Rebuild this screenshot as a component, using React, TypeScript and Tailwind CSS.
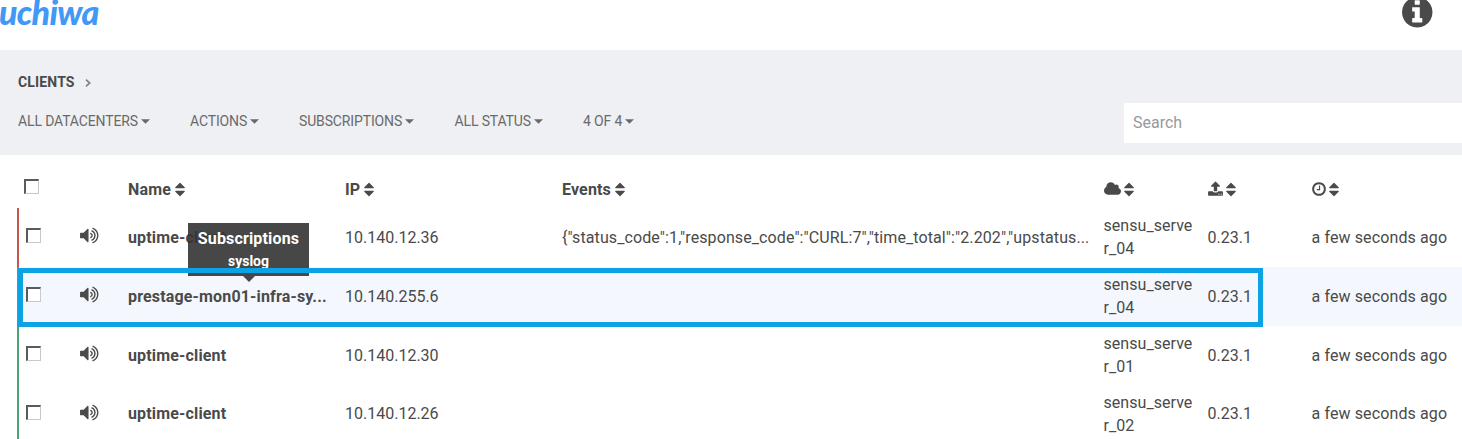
import type { ReactNode } from "react";

const ICONS = {
  volume:
    "M832 352v1088q0 26-19 45t-45 19-45-19l-333-333h-262q-26 0-45-19t-19-45v-384q0-26 19-45t45-19h262l333-333q19-19 45-19t45 19 19 45zm384 544q0 76-42.5 141.5t-112.5 93.5q-10 5-25 5-26 0-45-18.5t-19-45.5q0-21 12-35.5t29-25 34-23 29-36 12-56.5-12-56.5-29-36-34-23-29-25-12-35.5q0-27 19-45.5t45-18.5q15 0 25 5 70 27 112.5 93t42.5 142zm256 0q0 153-85 282.5t-225 188.5q-13 5-25 5-27 0-46-19t-19-45q0-39 39-59 56-29 76-44 74-54 115.5-135.5t41.5-173.5-41.5-173.5-115.5-135.5q-20-15-76-44-39-20-39-59 0-26 19-45t45-19q13 0 26 5 140 59 225 188.5t85 282.5zm256 0q0 230-127 422.5t-338 283.5q-13 5-26 5-26 0-45-19t-19-45q0-36 39-59 7-4 22.5-10.5t22.5-10.5q46-25 82-51 123-91 192-227t69-289-69-289-192-227q-36-26-82-51-7-4-22.5-10.5t-22.5-10.5q-39-23-39-59 0-26 19-45t45-19q13 0 26 5 211 91 338 283.5t127 422.5z",
  upload:
    "M1344 1472q0-26-19-45t-45-19-45 19-19 45 19 45 45 19 45-19 19-45zm256 0q0-26-19-45t-45-19-45 19-19 45 19 45 45 19 45-19 19-45zm128-224v320q0 40-28 68t-68 28h-1472q-40 0-68-28t-28-68v-320q0-40 28-68t68-28h427q21 56 70.5 92t110.5 36h256q61 0 110.5-36t70.5-92h427q40 0 68 28t28 68zm-325-648q-17 40-59 40h-256v448q0 26-19 45t-45 19h-256q-26 0-45-19t-19-45v-448h-256q-42 0-59-40-17-39 14-69l448-448q18-19 45-19t45 19l448 448q31 30 14 69z",
  clock:
    "M1024 544v448q0 14-9 23t-23 9h-320q-14 0-23-9t-9-23v-64q0-14 9-23t23-9h224v-352q0-14 9-23t23-9h64q14 0 23 9t9 23zm416 352q0-148-73-273t-198-198-273-73-273 73-198 198-73 273 73 273 198 198 273 73 273-73 198-198 73-273zm224 0q0 209-103 385.5t-279.5 279.5-385.5 103-385.5-103-279.5-279.5-103-385.5 103-385.5 279.5-279.5 385.5-103 385.5 103 279.5 279.5 103 385.5z",
  cloud:
    "M1984 1152q0 159-112.5 271.5t-271.5 112.5h-1088q-185 0-316.5-131.5t-131.5-316.5q0-132 71-241.5t187-163.5q-2-28-2-43 0-212 150-362t362-150q158 0 286.5 88t187.5 230q70-62 166-62 106 0 181 75t75 181q0 75-41 138 129 30 213 134.5t84 239.5z",
  info: "M1152 1376v-160q0-14-9-23t-23-9h-96v-512q0-14-9-23t-23-9h-320q-14 0-23 9t-9 23v160q0 14 9 23t23 9h96v320h-96q-14 0-23 9t-9 23v160q0 14 9 23t23 9h448q14 0 23-9t9-23zm-128-896v-160q0-14-9-23t-23-9h-192q-14 0-23 9t-9 23v160q0 14 9 23t23 9h192q14 0 23-9t9-23zm640 416q0 209-103 385.5t-279.5 279.5-385.5 103-385.5-103-279.5-279.5-103-385.5 103-385.5 279.5-279.5 385.5-103 385.5 103 279.5 279.5 103 385.5z",
  sort: "M1408 1088q0 26-19 45l-448 448q-19 19-45 19t-45-19l-448-448q-19-19-19-45t19-45 45-19h896q26 0 45 19t19 45zm0-384q0 26-19 45t-45 19h-896q-26 0-45-19t-19-45 19-45l448-448q19-19 45-19t45 19l448 448q19 19 19 45z",
};

function Icon({ d, box, className }: { d: string; box: string; className: string }) {
  return (
    <svg viewBox={box} className={className} fill="currentColor" aria-hidden="true">
      <path d={d} />
    </svg>
  );
}

const Sort = () => <Icon d={ICONS.sort} box="384 0 1024 1792" className="h-[17px] w-[10px] shrink-0" />;

const Checkbox = ({ label }: { label: string }) => (
  <input
    type="checkbox"
    aria-label={label}
    className="block size-[15px] appearance-none border-t-2 border-r border-b border-l-2 border-t-[#5b5b5b] border-r-[#c9c9c9] border-b-[#c9c9c9] border-l-[#5b5b5b] bg-white"
  />
);

const COLS = "grid grid-cols-[61px_48px_217px_217px_541.5px_104px_104px_1fr]";

const FILTERS = [
  { label: "ALL DATACENTERS", width: "w-[172px]" },
  { label: "ACTIONS", width: "w-[109px]" },
  { label: "SUBSCRIPTIONS", width: "w-[155.5px]" },
  { label: "ALL STATUS", width: "w-[128.5px]" },
  { label: "4 OF 4", width: "w-[80px]" },
];

const ROWS = [
  { name: "uptime-client", ip: "10.140.12.36", events: '{"status_code":1,"response_code":"CURL:7","time_total":"2.202","upstatus...', dc: ["sensu_serve", "r_04"], height: "h-[59px]", cell: "pt-px", dcCell: "", tone: "border-[#c5574c]" },
  { name: "prestage-mon01-infra-sy...", ip: "10.140.255.6", events: "", dc: ["sensu_serve", "r_04"], height: "h-[59px]", cell: "pt-px", dcCell: "", tone: "border-[#4ba573] bg-[#f4f8fe]" },
  { name: "uptime-client", ip: "10.140.12.30", events: "", dc: ["sensu_serve", "r_01"], height: "h-[59px]", cell: "pt-px", dcCell: "", tone: "border-[#4ba573]" },
  { name: "uptime-client", ip: "10.140.12.26", events: "", dc: ["sensu_serve", "r_02"], height: "h-[58px]", cell: "pb-px", dcCell: "pt-px", tone: "border-[#4ba573]" },
];

const Heading = ({ children }: { children: ReactNode }) => (
  <div className="flex items-center gap-1 font-bold tracking-[0.15px]">
    {children}
    <Sort />
  </div>
);

export default function App() {
  return (
    <div className="h-[439px] w-[1462px] overflow-hidden bg-white font-['Roboto',sans-serif] text-base leading-[23px] text-[#4a4a4a]">
      <header className="flex h-[50px] justify-between pr-[29.5px]">
        <div className="-mt-[9px] -ml-px h-[50px] font-['Lato',sans-serif] text-[34px] leading-[42px] font-black tracking-[-0.7px] text-[#4198f7] italic">
          uchiwa
        </div>
        <Icon d={ICONS.info} box="128 128 1536 1536" className="-mt-[3px] size-[30.5px]" />
      </header>

      <section className="h-[105px] bg-[#eff0f4] pl-[18px]">
        <div className="flex h-[53px] items-center gap-[10px] pt-[11px] text-sm font-bold tracking-[0.15px]">
          CLIENTS
          <svg viewBox="0 0 6 8" className="mt-px h-2 w-1.5" fill="none" stroke="#858585" strokeWidth="1.7">
            <path d="M1 .7 4.7 4 1 7.3" />
          </svg>
        </div>
        <div className="flex justify-between">
          <nav className="flex h-[36px] items-center text-sm tracking-[-0.14px] text-[#6a6a6a]">
            {FILTERS.map((f) => (
              <button key={f.label} className={`flex shrink-0 items-center gap-[3px] whitespace-nowrap ${f.width}`}>
                {f.label}
                <svg viewBox="0 0 9 5" className="h-[5px] w-[9px]" fill="currentColor">
                  <path d="M0 .3h9L4.5 4.8z" />
                </svg>
              </button>
            ))}
          </nav>
          <input
            placeholder="Search"
            className="h-10 w-[338px] bg-white px-[9px] pb-[2px] text-base placeholder:text-[#999999]"
          />
        </div>
      </section>

      <main className="relative pl-[17px]">
        <div className={`${COLS} h-[53px] items-center pt-[15px] pl-[2px]`}>
          <div className="-mt-[5px] pl-[5px]">
            <Checkbox label="Select all" />
          </div>
          <div />
          <Heading>Name</Heading>
          <Heading>IP</Heading>
          <Heading>Events</Heading>
          <Heading>
            <Icon d={ICONS.cloud} box="64 0 1920 1792" className="-mr-[0.5px] h-4 w-[17px]" />
          </Heading>
          <Heading>
            <Icon d={ICONS.upload} box="64 0 1664 1792" className="-mr-[0.5px] h-4 w-[15px]" />
          </Heading>
          <Heading>
            <Icon d={ICONS.clock} box="128 0 1536 1792" className="-mr-[0.5px] h-4 w-[14px]" />
          </Heading>
        </div>

        {ROWS.map((r) => (
          <div key={r.ip} className={`${COLS} items-center border-l-2 pb-px ${r.height} ${r.tone}`}>
            <div className="-mt-[3px] pl-[7px]">
              <Checkbox label={r.ip} />
            </div>
            <Icon d={ICONS.volume} box="64 128 1664 1536" className="-mt-[3px] h-[17px] w-[18.5px]" />
            <div className={`font-bold tracking-[0.16px] whitespace-nowrap ${r.cell}`}>{r.name}</div>
            <div className={r.cell}>{r.ip}</div>
            <div className={`tracking-[0.1px] whitespace-nowrap ${r.cell}`}>{r.events}</div>
            <div className={`tracking-[0.05px] ${r.dcCell}`}>
              {r.dc[0]}
              <br />
              {r.dc[1]}
            </div>
            <div className={r.cell}>0.23.1</div>
            <div className={`tracking-[0.12px] whitespace-nowrap ${r.cell}`}>a few seconds ago</div>
          </div>
        ))}

        <div
          role="tooltip"
          className="absolute top-[68px] left-[188px] flex h-[53px] w-[121px] flex-col items-center bg-[#333333]/90 pt-[4px] font-bold text-white"
        >
          <span className="tracking-[0.15px]">Subscriptions</span>
          <span className="text-sm leading-[23px]">syslog</span>
          <svg viewBox="0 0 12 6" className="absolute top-full h-1.5 w-3 text-[#333333]/90" fill="currentColor">
            <path d="M0 0h12L6 6z" />
          </svg>
        </div>
        <div className="absolute top-[113px] left-[18px] h-[59px] w-[1245px] border-5 border-[#0ba3e4]" />
      </main>
    </div>
  );
}
